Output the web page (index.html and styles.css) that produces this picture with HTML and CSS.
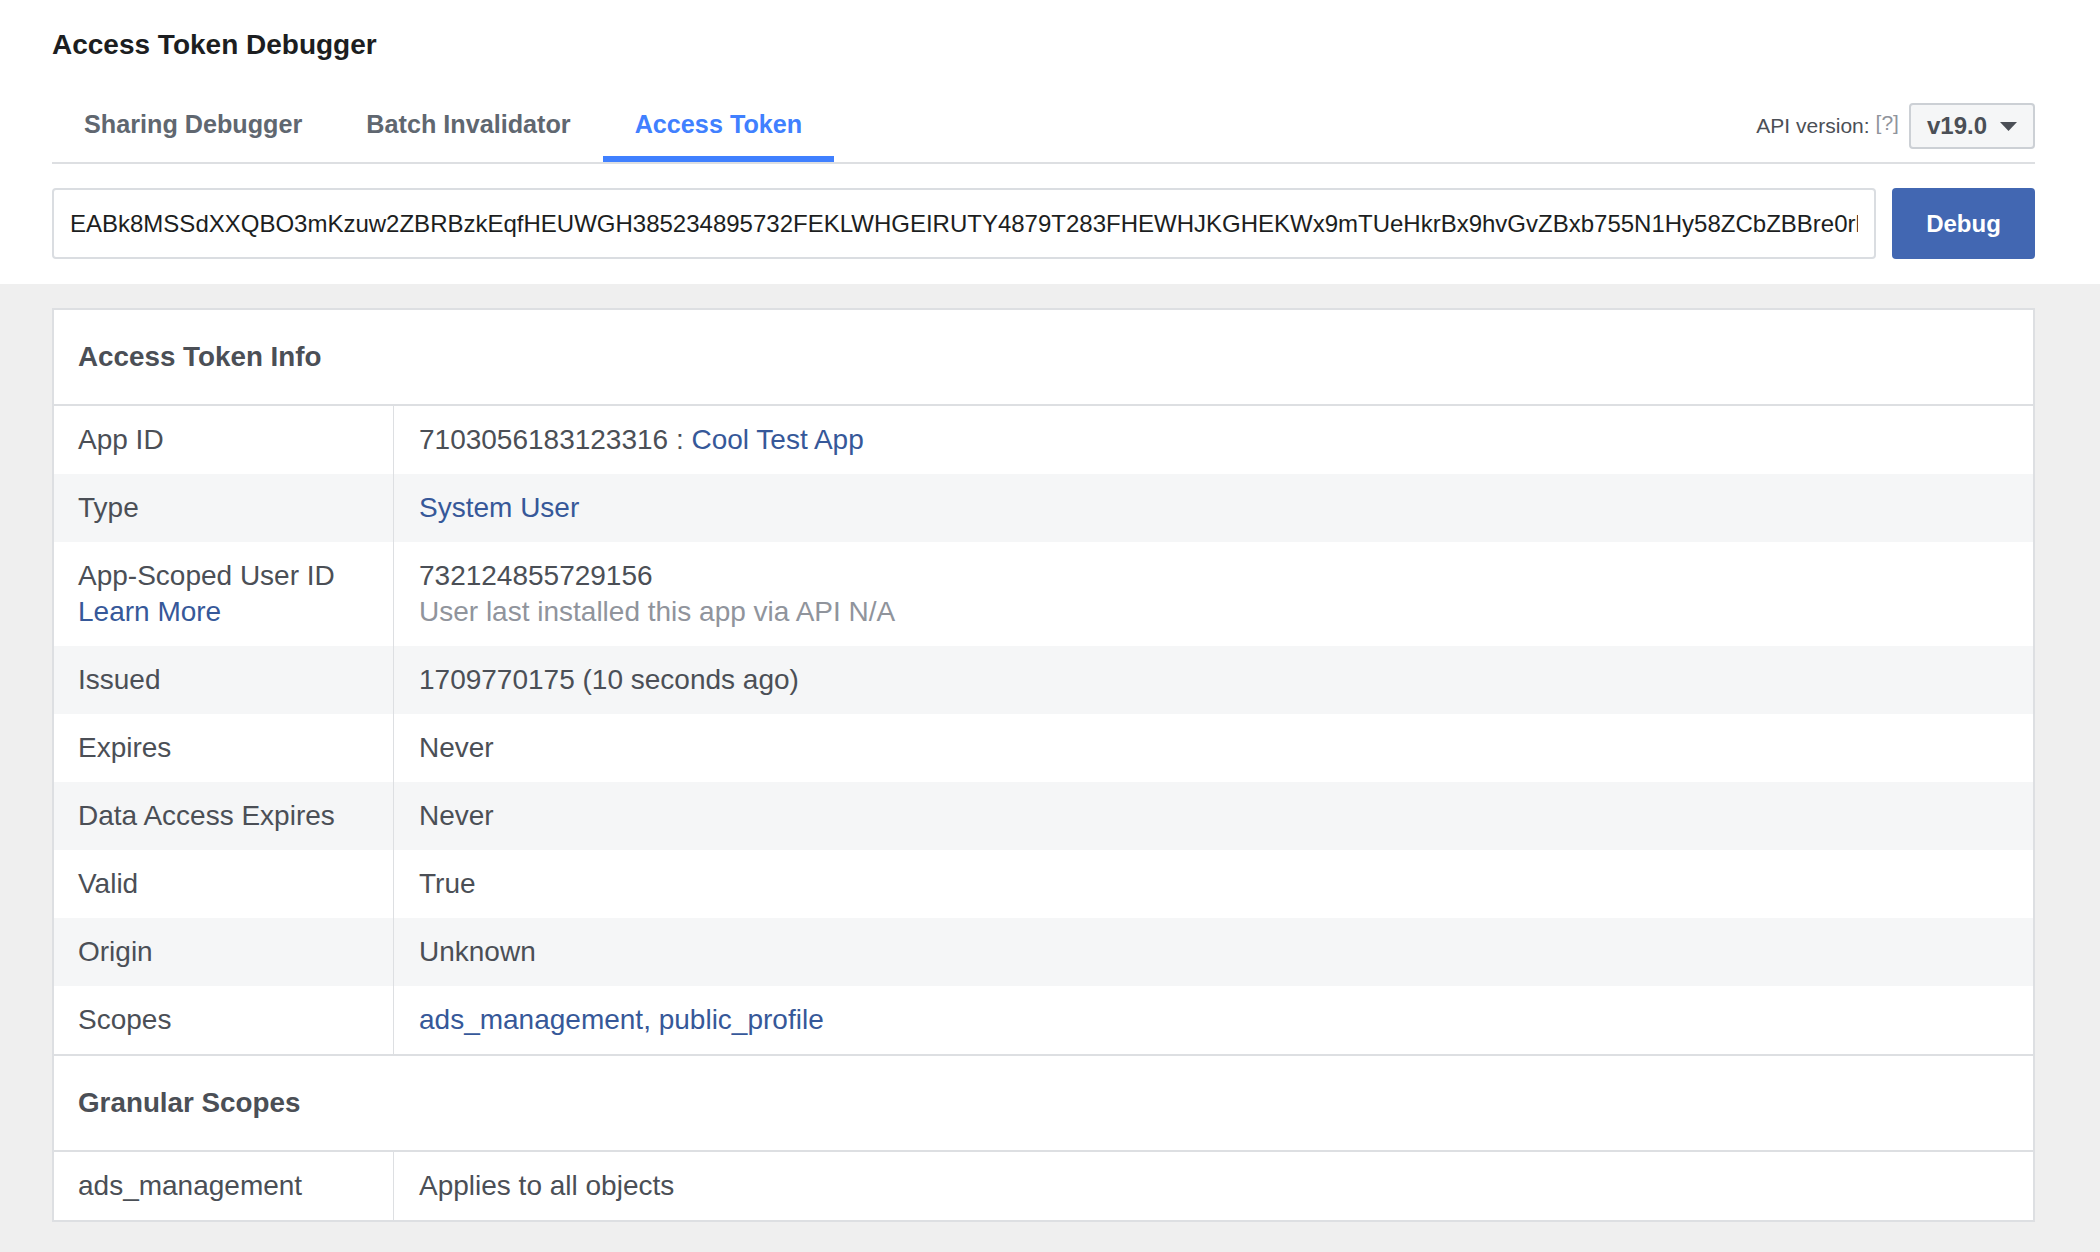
FILE: index.html
```html
<!DOCTYPE html>
<html lang="en">
<head>
<meta charset="utf-8">
<title>Access Token Debugger</title>
<link rel="stylesheet" href="styles.css">
</head>
<body>
<div class="top">
  <h1 class="title">Access Token Debugger</h1>
  <div class="tabs">
    <a class="tab">Sharing Debugger</a>
    <a class="tab">Batch Invalidator</a>
    <a class="tab active">Access Token</a>
    <div class="api">
      <span class="api-label">API version:</span>
      <span class="help">[?]</span>
      <div class="select">
        <span class="select-text">v19.0</span>
        <svg class="caret" width="17" height="9" viewBox="0 0 17 9"><polygon points="0,0 17,0 8.5,9" fill="#4b4f56"/></svg>
      </div>
    </div>
  </div>
  <div class="input-row">
    <input class="token" type="text" readonly value="EABk8MSSdXXQBO3mKzuw2ZBRBzkEqfHEUWGH385234895732FEKLWHGEIRUTY4879T283FHEWHJKGHEKWx9mTUeHkrBx9hvGvZBxb755N1Hy58ZCbZBBre0rlZCZAqNkE2KwEZD">
    <button class="debug">Debug</button>
  </div>
</div>
<div class="main">
  <div class="card">
    <div class="card-head">Access Token Info</div>
    <div class="rows">
      <div class="row"><div class="label">App ID</div><div class="value">7103056183123316 : <a class="link">Cool Test App</a></div></div>
      <div class="row"><div class="label">Type</div><div class="value"><a class="link">System User</a></div></div>
      <div class="row"><div class="label">App-Scoped User ID<br><a class="link">Learn More</a></div><div class="value">732124855729156<br><span class="muted">User last installed this app via API N/A</span></div></div>
      <div class="row"><div class="label">Issued</div><div class="value">1709770175 (10 seconds ago)</div></div>
      <div class="row"><div class="label">Expires</div><div class="value">Never</div></div>
      <div class="row"><div class="label">Data Access Expires</div><div class="value">Never</div></div>
      <div class="row"><div class="label">Valid</div><div class="value">True</div></div>
      <div class="row"><div class="label">Origin</div><div class="value">Unknown</div></div>
      <div class="row"><div class="label">Scopes</div><div class="value"><a class="link">ads_management, public_profile</a></div></div>
    </div>
    <div class="card-head">Granular Scopes</div>
    <div class="rows last">
      <div class="row"><div class="label">ads_management</div><div class="value">Applies to all objects</div></div>
    </div>
  </div>
</div>
</body>
</html>
```

FILE: styles.css
```css
* { box-sizing: border-box; }
html, body {
  margin: 0;
  padding: 0;
}
body {
  background: #efefef;
  font-family: "Liberation Sans", Arial, Helvetica, sans-serif;
  color: #4b4f56;
  min-height: 100vh;
}
.top {
  background: #ffffff;
  padding: 0 65px 25px 52px;
}
.title {
  margin: 0;
  padding-top: 29px;
  font-size: 28px;
  line-height: 32px;
  font-weight: bold;
  color: #1c1e21;
}
.tabs {
  margin-top: 42px;
  display: flex;
  align-items: flex-end;
  border-bottom: 2px solid #dddfe2;
}
.tab {
  display: block;
  padding: 0 32px 15px;
  font-size: 25.2px;
  line-height: 33px;
  font-weight: bold;
  color: #606770;
  border-bottom: 6px solid transparent;
  cursor: pointer;
}
.tab.active {
  color: #4080ff;
  border-bottom-color: #4080ff;
}
.api {
  margin-left: auto;
  margin-bottom: 13px;
  display: flex;
  align-items: center;
  font-size: 21px;
}
.api-label { color: #4b4f56; }
.help {
  color: #90949c;
  margin-left: 6px;
  margin-right: 10px;
  position: relative;
  top: -3px;
}
.select {
  height: 46px;
  display: flex;
  align-items: center;
  border: 2px solid #ccd0d5;
  border-radius: 4px;
  background: #f5f6f7;
  padding: 0 16px 0 16px;
}
.select-text {
  font-size: 24px;
  font-weight: bold;
  color: #4b4f56;
}
.caret {
  margin-left: 13px;
  display: block;
}
.input-row {
  margin-top: 24px;
  display: flex;
  gap: 16px;
}
.token {
  flex: 1;
  min-width: 0;
  height: 71px;
  border: 2px solid #dadde1;
  border-radius: 4px;
  padding: 0 16px;
  font-family: "Liberation Sans", Arial, Helvetica, sans-serif;
  font-size: 24px;
  color: #1c1e21;
  background: #fff;
  outline: none;
}
.debug {
  width: 143px;
  height: 71px;
  border: none;
  border-radius: 4px;
  background: #4267b2;
  color: #fff;
  font-family: "Liberation Sans", Arial, Helvetica, sans-serif;
  font-size: 24px;
  font-weight: bold;
}
.main {
  padding: 24px 65px 30px 52px;
}
.card {
  background: #fff;
  border: 2px solid #dddfe2;
}
.card-head {
  height: 96px;
  display: flex;
  align-items: center;
  padding: 0 24px;
  font-size: 27.8px;
  font-weight: bold;
  color: #4b4f56;
  border-bottom: 2px solid #dddfe2;
}
.rows {
  border-bottom: 2px solid #dddfe2;
}
.rows.last { border-bottom: none; }
.row {
  display: flex;
  font-size: 28px;
  line-height: 36px;
}
.row:nth-child(even) { background: #f5f6f7; }
.label {
  width: 340px;
  flex: none;
  padding: 16px 24px;
  border-right: 1px solid #dddfe2;
}
.value {
  flex: 1;
  padding: 16px 25px;
}
.link {
  color: #365899;
  text-decoration: none;
  cursor: pointer;
}
.muted { color: #90949c; }
```
